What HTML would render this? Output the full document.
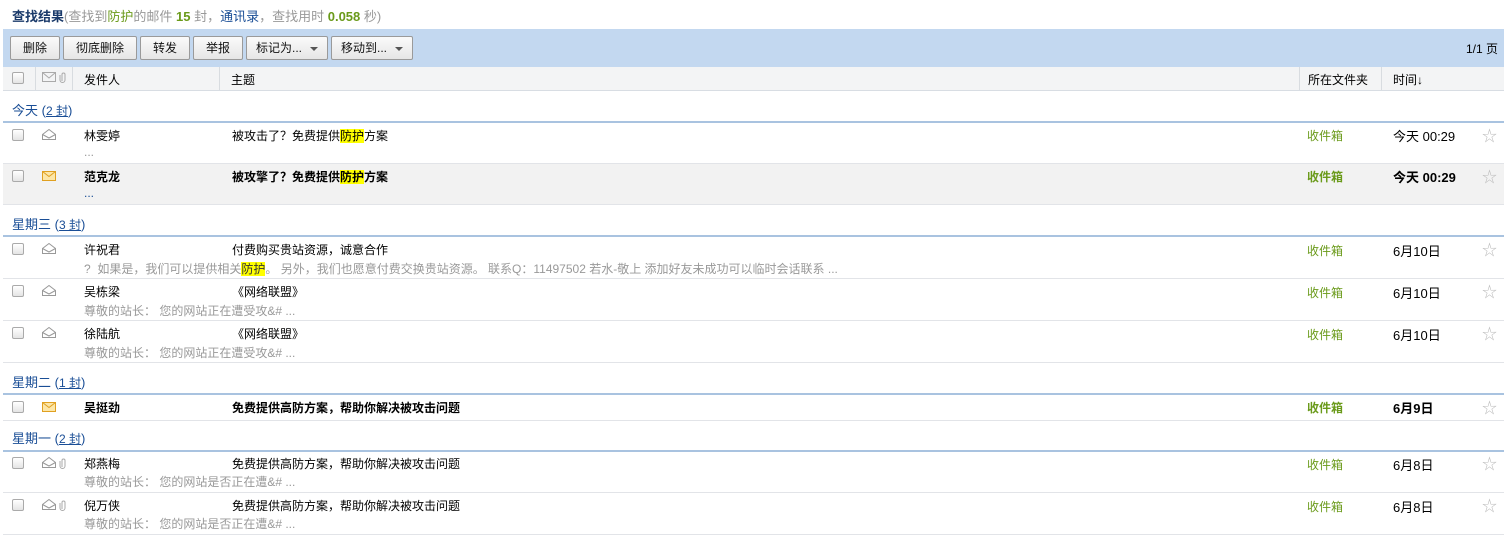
<!DOCTYPE html>
<html><head><meta charset="utf-8"><style>
*{margin:0;padding:0;box-sizing:border-box}
body{width:1504px;height:538px;background:#fff;font-family:"Liberation Sans","Noto Sans CJK SC",sans-serif;font-size:12px;color:#000;position:relative;overflow:hidden}
.a{position:absolute;white-space:nowrap}
.title{left:12px;top:6px;font-size:13px;color:#999}
.title b{color:#1a3a6a}
.g{color:#6a9a1a;font-weight:bold}
.tb{position:absolute;left:3px;top:29px;width:1501px;height:38px;background:#c3d8f0}
.btn{position:absolute;top:7px;height:24px;border:1px solid #9a9a9a;border-radius:2px;background:linear-gradient(#fafafa,#e6e6e6);font-size:12px;line-height:22px;text-align:center;color:#111}
.tri{display:inline-block;width:0;height:0;border-left:4px solid transparent;border-right:4px solid transparent;border-top:4px solid #555;vertical-align:middle;margin-left:8px}
.hd{position:absolute;left:3px;top:67px;width:1501px;height:24px;background:#f3f4f5;border-bottom:1px solid #d8dde3}
.sep{position:absolute;top:0;width:1px;height:23px;background:#d8dce0}
.cb{position:absolute;width:12px;height:12px;border:1px solid #aaa;border-radius:2px;background:linear-gradient(#fff,#e4e4e4)}
.grp{position:absolute;left:12px;font-size:13px;color:#1a4e96}
.grp u{font-size:12px}
.gl{position:absolute;left:3px;width:1501px;height:2px;background:#a9c3e0}
.row{position:absolute;left:3px;width:1501px;border-bottom:1px solid #e2e4e8}
.sum{color:#999}
.fold{color:#6a9a1a}
.hl{background:#ff0}
.star{color:#bbb;font-size:15px}
.bold{font-weight:bold}
</style></head><body>
<div class="a title"><b>查找结果</b>(查找到<span style="color:#6a9a1a">防护</span>的邮件 <span class="g">15</span> 封，<span style="color:#1a4e96">通讯录</span>，查找用时 <span class="g">0.058</span> 秒)</div>
<div class="tb">
<div class="btn" style="left:7px;width:50px">删除</div>
<div class="btn" style="left:60px;width:74px">彻底删除</div>
<div class="btn" style="left:137px;width:50px">转发</div>
<div class="btn" style="left:190px;width:50px">举报</div>
<div class="btn" style="left:243px;width:82px">标记为...<span class="tri"></span></div>
<div class="btn" style="left:328px;width:82px">移动到...<span class="tri"></span></div>
<div class="a" style="right:6px;top:11px">1/1 页</div>
</div>
<div class="hd">
<div class="cb" style="left:9px;top:5px"></div>
<div class="sep" style="left:32px"></div>
<svg class="a" style="left:39px;top:5px" width="26" height="11"><rect x="0.5" y="0.5" width="13" height="9" fill="none" stroke="#aaa"/><path d="M0.5 0.5L7 6L13.5 0.5" fill="none" stroke="#aaa"/><path d="M20 9V2.5a1.5 1.5 0 0 1 3 0V8a2.5 2.5 0 0 1-5 0V3" fill="none" stroke="#aaa"/></svg>
<div class="sep" style="left:69px"></div>
<div class="a" style="left:81px;top:4px">发件人</div>
<div class="sep" style="left:216px"></div>
<div class="a" style="left:228px;top:4px">主题</div>
<div class="sep" style="left:1296px"></div>
<div class="a" style="left:1305px;top:4px">所在文件夹</div>
<div class="sep" style="left:1378px"></div>
<div class="a" style="left:1390px;top:4px">时间↓</div>
</div>

<div class="grp a" style="top:100px">今天 (<u>2 封</u>)</div>
<div class="gl" style="top:121px"></div>
<div class="row" style="top:123px;height:41px"></div>
<div class="row" style="top:164px;height:41px;background:#f2f2f2"></div>

<div class="grp a" style="top:214px">星期三 (<u>3 封</u>)</div>
<div class="gl" style="top:235px"></div>
<div class="row" style="top:237px;height:42px"></div>
<div class="row" style="top:279px;height:42px"></div>
<div class="row" style="top:321px;height:42px"></div>

<div class="grp a" style="top:372px">星期二 (<u>1 封</u>)</div>
<div class="gl" style="top:393px"></div>
<div class="row" style="top:395px;height:26px"></div>

<div class="grp a" style="top:428px">星期一 (<u>2 封</u>)</div>
<div class="gl" style="top:450px"></div>
<div class="row" style="top:452px;height:41px"></div>
<div class="row" style="top:493px;height:42px"></div>

<svg width="0" height="0" style="position:absolute"><defs>
<g id="env"><path d="M0.5 5.5L7 0.5L13.5 5.5V10.5H0.5Z" fill="#fff" stroke="#999"/><path d="M0.5 5.5L7 9L13.5 5.5" fill="none" stroke="#999"/></g>
<g id="envn"><rect x="0.5" y="0.5" width="13" height="9" fill="#fce6a8" stroke="#e0a020"/><path d="M0.5 0.5L7 5.5L13.5 0.5" fill="none" stroke="#e0a020"/></g>
</defs></svg>

<div class="cb" style="left:12px;top:129px"></div>
<svg class="a" style="left:42px;top:129px" width="15" height="12"><use href="#env"/></svg>
<div class="a" style="left:84px;top:127px">林雯婷</div>
<div class="a sum" style="left:84px;top:145px">...</div>
<div class="a" style="left:232px;top:127px">被攻击了？免费提供<span class="hl">防护</span>方案</div>
<div class="a fold" style="left:1307px;top:127px">收件箱</div>
<div class="a" style="left:1393px;top:126px;font-size:13px">今天 00:29</div>
<div class="a star" style="left:1482px;top:125px">☆</div>

<div class="cb" style="left:12px;top:170px"></div>
<svg class="a" style="left:42px;top:171px" width="15" height="11"><use href="#envn"/></svg>
<div class="a bold" style="left:84px;top:168px">范克龙</div>
<div class="a sum" style="left:84px;top:186px;color:#1a4e96">...</div>
<div class="a bold" style="left:232px;top:168px">被攻擎了？免费提供<span class="hl">防护</span>方案</div>
<div class="a fold bold" style="left:1307px;top:168px">收件箱</div>
<div class="a bold" style="left:1393px;top:167px;font-size:13px">今天 00:29</div>
<div class="a star" style="left:1482px;top:166px">☆</div>

<div class="cb" style="left:12px;top:243px"></div>
<svg class="a" style="left:42px;top:243px" width="15" height="12"><use href="#env"/></svg>
<div class="a" style="left:84px;top:241px">许祝君</div>
<div class="a sum" style="left:84px;top:260px">?&nbsp; 如果是，我们可以提供相关<span class="hl" style="color:#333">防护</span>。 另外，我们也愿意付费交换贵站资源。 联系Q：11497502 若水-敬上 添加好友未成功可以临时会话联系 ...</div>
<div class="a" style="left:232px;top:241px">付费购买贵站资源，诚意合作</div>
<div class="a fold" style="left:1307px;top:242px">收件箱</div>
<div class="a" style="left:1393px;top:241px;font-size:13px">6月10日</div>
<div class="a star" style="left:1482px;top:239px">☆</div>

<div class="cb" style="left:12px;top:285px"></div>
<svg class="a" style="left:42px;top:285px" width="15" height="12"><use href="#env"/></svg>
<div class="a" style="left:84px;top:283px">吴栋梁</div>
<div class="a sum" style="left:84px;top:302px">尊敬的站长： 您的网站正在遭受攻&amp;# ...</div>
<div class="a" style="left:232px;top:283px">《网络联盟》</div>
<div class="a fold" style="left:1307px;top:284px">收件箱</div>
<div class="a" style="left:1393px;top:283px;font-size:13px">6月10日</div>
<div class="a star" style="left:1482px;top:281px">☆</div>

<div class="cb" style="left:12px;top:327px"></div>
<svg class="a" style="left:42px;top:327px" width="15" height="12"><use href="#env"/></svg>
<div class="a" style="left:84px;top:325px">徐陆航</div>
<div class="a sum" style="left:84px;top:344px">尊敬的站长： 您的网站正在遭受攻&amp;# ...</div>
<div class="a" style="left:232px;top:325px">《网络联盟》</div>
<div class="a fold" style="left:1307px;top:326px">收件箱</div>
<div class="a" style="left:1393px;top:325px;font-size:13px">6月10日</div>
<div class="a star" style="left:1482px;top:323px">☆</div>

<div class="cb" style="left:12px;top:401px"></div>
<svg class="a" style="left:42px;top:402px" width="15" height="11"><use href="#envn"/></svg>
<div class="a bold" style="left:84px;top:399px">吴挺劲</div>
<div class="a bold" style="left:232px;top:399px">免费提供高防方案，帮助你解决被攻击问题</div>
<div class="a fold bold" style="left:1307px;top:399px">收件箱</div>
<div class="a bold" style="left:1393px;top:398px;font-size:13px">6月9日</div>
<div class="a star" style="left:1482px;top:397px">☆</div>

<div class="cb" style="left:12px;top:457px"></div>
<svg class="a" style="left:42px;top:457px" width="26" height="12"><use href="#env"/><path d="M20 10V3.5a1.5 1.5 0 0 1 3 0V9a2.5 2.5 0 0 1-5 0V4" fill="none" stroke="#aaa"/></svg>
<div class="a" style="left:84px;top:455px">郑燕梅</div>
<div class="a sum" style="left:84px;top:473px">尊敬的站长： 您的网站是否正在遭&amp;# ...</div>
<div class="a" style="left:232px;top:455px">免费提供高防方案，帮助你解决被攻击问题</div>
<div class="a fold" style="left:1307px;top:456px">收件箱</div>
<div class="a" style="left:1393px;top:455px;font-size:13px">6月8日</div>
<div class="a star" style="left:1482px;top:453px">☆</div>

<div class="cb" style="left:12px;top:499px"></div>
<svg class="a" style="left:42px;top:499px" width="26" height="12"><use href="#env"/><path d="M20 10V3.5a1.5 1.5 0 0 1 3 0V9a2.5 2.5 0 0 1-5 0V4" fill="none" stroke="#aaa"/></svg>
<div class="a" style="left:84px;top:497px">倪万侠</div>
<div class="a sum" style="left:84px;top:515px">尊敬的站长： 您的网站是否正在遭&amp;# ...</div>
<div class="a" style="left:232px;top:497px">免费提供高防方案，帮助你解决被攻击问题</div>
<div class="a fold" style="left:1307px;top:498px">收件箱</div>
<div class="a" style="left:1393px;top:497px;font-size:13px">6月8日</div>
<div class="a star" style="left:1482px;top:495px">☆</div>
</body></html>
